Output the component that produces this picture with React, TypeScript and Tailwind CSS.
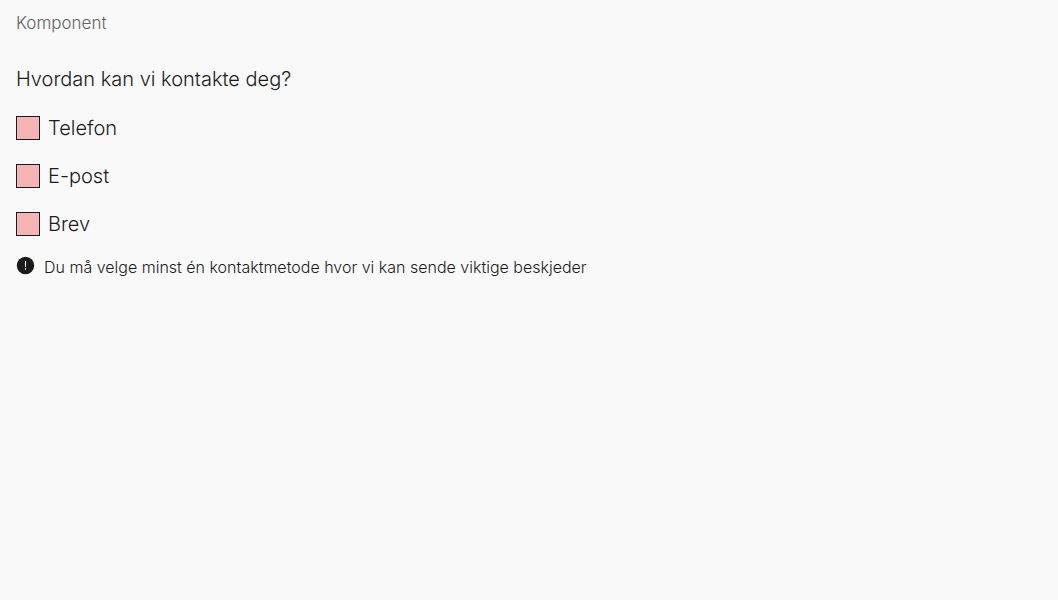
const options = ['Telefon', 'E-post', 'Brev'];

export default function App() {
  return (
    <main className="min-h-screen bg-[#f9f9f9] px-4 pt-3 font-['Inter','Liberation_Sans',sans-serif] text-[#1b1b1b]">
      <p className="text-[17px] leading-[22px] font-light text-[#636363]">Komponent</p>
      <fieldset className="mt-[30px]" aria-describedby="contact-error">
        <legend className="text-xl leading-[30px] font-light">Hvordan kan vi kontakte deg?</legend>
        <div className="mt-[18px] flex flex-col items-start gap-4">
          {options.map((option) => (
            <label key={option} className="flex items-center gap-2 text-xl leading-8 font-light">
              <input
                type="checkbox"
                className="size-6 shrink-0 appearance-none border border-[#1b1b1b] bg-[#f6b3b3]"
              />
              {option}
            </label>
          ))}
        </div>
        <p id="contact-error" className="mt-4 flex gap-2 text-base leading-[22px] font-light">
          <svg className="size-5 shrink-0" viewBox="0 0 20 20" aria-hidden="true">
            <circle cx="9.5" cy="9.5" r="8.7" fill="#1b1b1b" />
            <path d="M9.5 5v6M9.5 12.2v1.6" stroke="#f9f9f9" strokeWidth="1.1" />
          </svg>
          Du må velge minst én kontaktmetode hvor vi kan sende viktige beskjeder
        </p>
      </fieldset>
    </main>
  );
}
